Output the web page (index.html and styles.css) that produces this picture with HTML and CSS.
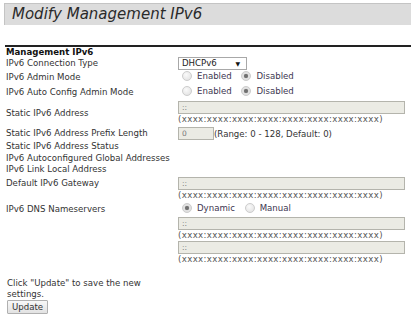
FILE: index.html
```html
<!DOCTYPE html>
<html lang="en">
<head>
  <meta charset="UTF-8">
  <title>Modify Management IPv6</title>
  <link rel="stylesheet" href="styles.css">
</head>
<body>

<div class="page">
  <h1 class="page-title">Modify Management IPv6</h1>

  <div class="section">
    <h2>Management IPv6</h2>
    <table class="form-table">
      <tr class="r14">
        <td class="label">IPv6 Connection Type</td>
        <td>
          <div class="select">DHCPv6 <span class="arrow">&#9660;</span></div>
        </td>
      </tr>
      <tr class="r14">
        <td class="label">IPv6 Admin Mode</td>
        <td class="radios">
          <label><input type="radio" name="admin" disabled> Enabled</label>
          <label><input type="radio" name="admin" checked disabled> Disabled</label>
        </td>
      </tr>
      <tr class="r15">
        <td class="label">IPv6 Auto Config Admin Mode</td>
        <td class="radios">
          <label><input type="radio" name="auto" disabled> Enabled</label>
          <label><input type="radio" name="auto" checked disabled> Disabled</label>
        </td>
      </tr>
      <tr>
        <td class="label">Static IPv6 Address</td>
        <td class="block">
          <input class="field wide" type="text" value="::" disabled>
          <div class="hint">(xxxx:xxxx:xxxx:xxxx:xxxx:xxxx:xxxx:xxxx)</div>
        </td>
      </tr>
      <tr class="r14">
        <td class="label">Static IPv6 Address Prefix Length</td>
        <td>
          <input class="field short" type="text" value="0" disabled><span class="range">(Range: 0 - 128, Default: 0)</span>
        </td>
      </tr>
      <tr class="r12">
        <td class="label">Static IPv6 Address Status</td>
        <td></td>
      </tr>
      <tr class="r11">
        <td class="label">IPv6 Autoconfigured Global Addresses</td>
        <td></td>
      </tr>
      <tr class="r12">
        <td class="label">IPv6 Link Local Address</td>
        <td></td>
      </tr>
      <tr>
        <td class="label top">Default IPv6 Gateway</td>
        <td class="block">
          <input class="field wide" type="text" value="::" disabled>
          <div class="hint">(xxxx:xxxx:xxxx:xxxx:xxxx:xxxx:xxxx:xxxx)</div>
        </td>
      </tr>
      <tr class="r14">
        <td class="label">IPv6 DNS Nameservers</td>
        <td class="radios">
          <label><input type="radio" name="dns" checked disabled> Dynamic</label>
          <label><input type="radio" name="dns" disabled> Manual</label>
        </td>
      </tr>
      <tr>
        <td></td>
        <td class="block dns-first">
          <input class="field wide" type="text" value="::" disabled>
          <div class="hint">(xxxx:xxxx:xxxx:xxxx:xxxx:xxxx:xxxx:xxxx)</div>
        </td>
      </tr>
      <tr>
        <td></td>
        <td class="block dns-next">
          <input class="field wide" type="text" value="::" disabled>
          <div class="hint">(xxxx:xxxx:xxxx:xxxx:xxxx:xxxx:xxxx:xxxx)</div>
        </td>
      </tr>
    </table>
  </div>

  <p class="note">Click "Update" to save the new settings.</p>
  <button type="button" class="update">Update</button>
</div>

</body>
</html>
```

FILE: styles.css
```css
* {
  box-sizing: border-box;
}

body {
  margin: 0;
  font-family: "DejaVu Sans", Verdana, sans-serif;
  font-size: 8.6px;
  color: #333;
  background: #fff;
}

.page {
  padding: 3px 0 0 4px;
}

.page-title {
  margin: 0;
  height: 22px;
  padding-left: 7px;
  background-color: #dcdcdc;
  border-top: 1px solid #c4c4c4;
  border-left: 1px solid #c4c4c4;
  font-size: 15px;
  font-weight: normal;
  font-style: italic;
  line-height: 21px;
  color: #2a2a2a;
}

.section {
  margin: 20px 0 0 1px;
  border-top: 2px solid #222;
}

.section h2 {
  margin: 0;
  height: 9px;
  padding: 1px 0 0 1px;
  font-size: 8.6px;
  line-height: 8px;
  font-weight: bold;
  color: #111;
}

.form-table {
  border-collapse: collapse;
}

.form-table td {
  padding: 0;
  vertical-align: middle;
}

.form-table td.label {
  width: 173px;
  padding-left: 1px;
  white-space: nowrap;
}

.form-table td.label.top {
  vertical-align: top;
  padding-top: 3px;
  line-height: 10px;
}

.r11 { height: 11px; }
.r12 { height: 12px; }
.r14 { height: 14px; }
.r15 { height: 15px; }

.block {
  padding-top: 2px !important;
  padding-bottom: 1px !important;
}

.block.dns-first {
  padding-top: 1px !important;
  padding-bottom: 0 !important;
}

.block.dns-next {
  padding-top: 0 !important;
  padding-bottom: 0 !important;
}

.select {
  display: inline-block;
  width: 69px;
  height: 13px;
  padding-left: 3px;
  border: 1px solid #a8a8a8;
  background: #fff;
  line-height: 11px;
  color: #222;
  position: relative;
}

.select .arrow {
  position: absolute;
  right: 6px;
  top: 0;
  font-size: 6px;
  line-height: 11px;
  color: #111;
}

.radios label {
  display: inline-flex;
  align-items: center;
  margin-right: 3px;
  color: #3d3550;
}

.radios input {
  appearance: none;
  width: 10px;
  height: 10px;
  margin: 0 5px 0 4px;
  border-radius: 50%;
  border: 1px solid #cdcdcd;
  background: radial-gradient(circle at 40% 35%, #fafafa, #dedede);
}

.radios input:checked {
  background: radial-gradient(circle, #6a6a6a 0, #7a7a7a 1.8px, #e4e4e4 2.6px, #d8d8d8 100%);
}

.field {
  display: block;
  height: 13px;
  margin: 0;
  padding: 0 0 0 3px;
  border: 1px solid #b4b4ac;
  background-color: #ebebe4;
  font-family: inherit;
  font-size: 7.5px;
  color: #777;
}

.field.wide {
  width: 227px;
}

.field.short {
  display: inline-block;
  width: 36px;
  vertical-align: middle;
}

.range {
  vertical-align: middle;
}

.hint {
  height: 11px;
  letter-spacing: 0.37px;
  line-height: 11px;
  color: #555;
}

.note {
  width: 150px;
  margin: 13px 0 0 3px;
  line-height: 11px;
}

.update {
  display: block;
  margin: 0 0 0 3px;
  height: 14px;
  padding: 0 4px;
  font-family: inherit;
  font-size: 8.6px;
  line-height: 12px;
  color: #333;
  background: linear-gradient(#f8f8f8, #e2e2e2);
  border: 1px solid #b0b0b0;
  border-radius: 1px;
}
```
